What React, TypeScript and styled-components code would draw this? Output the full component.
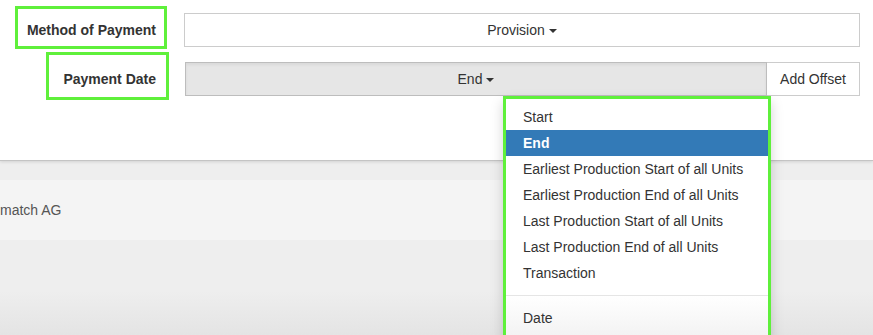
import React from 'react';
import styled, { createGlobalStyle } from 'styled-components';

const GlobalStyle = createGlobalStyle`
  html, body {
    margin: 0;
    padding: 0;
    overflow: hidden;
  }
  body {
    font-family: "Liberation Sans", Arial, sans-serif;
    font-size: 14px;
    color: #333;
    background: #eee;
  }
`;

const menuItems: { name: string; active?: boolean }[] = [
  { name: 'Start' },
  { name: 'End', active: true },
  { name: 'Earliest Production Start of all Units' },
  { name: 'Earliest Production End of all Units' },
  { name: 'Last Production Start of all Units' },
  { name: 'Last Production End of all Units' },
  { name: 'Transaction' }
];

export default function App() {
  return (
    <Page>
      <GlobalStyle />
      <TopPanel>
        <Form>
          <LabelCell>
            <Marked $pad="11px 8px 6px 9px" $top={-7} $right={3}>
              Method of Payment
            </Marked>
          </LabelCell>
          <Control>
            <Btn>
              Provision <Caret />
            </Btn>
          </Control>

          <LabelCell>
            <Marked $pad="14px 10px 8px 14px" $top={-10} $right={1}>
              Payment Date
            </Marked>
          </LabelCell>
          <Control>
            <DropdownWrap>
              <Btn $active>
                End <Caret />
              </Btn>
              <MenuFrame>
                <Menu>
                  {menuItems.map(x => (
                    <MenuItem key={x.name} $active={x.active}>{x.name}</MenuItem>
                  ))}
                  <Divider />
                  <MenuItem>Date</MenuItem>
                </Menu>
              </MenuFrame>
            </DropdownWrap>
            <OffsetBtn>Add Offset</OffsetBtn>
          </Control>
        </Form>
      </TopPanel>
      <Footer>
        <Band>match AG</Band>
      </Footer>
    </Page>
  );
}

const Page = styled.div`
  width: 873px;
  height: 335px;
  overflow: hidden;
  display: flex;
  flex-direction: column;
  background: #eee;
`;

const TopPanel = styled.div`
  flex: none;
  height: 161px;
  box-sizing: border-box;
  padding: 13px 13px 0 0;
  background: #fff;
  border-bottom: 1px solid #c4c4c4;
  box-shadow: 0 1px 3px rgba(0, 0, 0, 0.12);
  position: relative;
  z-index: 1;
`;

const Form = styled.div`
  display: grid;
  grid-template-columns: 170px 1fr;
  grid-auto-rows: 34px;
  column-gap: 14px;
  row-gap: 15px;
`;

const LabelCell = styled.div`
  display: flex;
  justify-content: flex-end;
  align-items: flex-start;
  height: 34px;
`;

const Marked = styled.label<{ $pad: string; $top: number; $right: number }>`
  display: block;
  flex: none;
  padding: ${p => p.$pad};
  margin-top: ${p => p.$top}px;
  margin-right: ${p => p.$right}px;
  border: 3px solid #5ff03b;
  font-weight: bold;
  line-height: 20px;
  white-space: nowrap;
  color: #333;
`;

const Control = styled.div`
  display: flex;
  height: 34px;
`;

const Btn = styled.button<{ $active?: boolean }>`
  flex: 1;
  height: 34px;
  display: flex;
  align-items: center;
  justify-content: center;
  gap: 4px;
  padding: 0 12px;
  box-sizing: border-box;
  font-family: inherit;
  font-size: 14px;
  color: #333;
  background: ${p => (p.$active ? '#e6e6e6' : '#fff')};
  border: 1px solid ${p => (p.$active ? '#bdbdbd' : '#ccc')};
  box-shadow: ${p => (p.$active ? 'inset 0 2px 3px rgba(0,0,0,0.06)' : 'none')};
`;

const Caret = styled.span`
  display: inline-block;
  width: 0;
  height: 0;
  border-top: 4px solid #333;
  border-left: 4px solid transparent;
  border-right: 4px solid transparent;
  margin-top: 1px;
`;

const DropdownWrap = styled.div`
  position: relative;
  flex: 1;
  display: flex;
  margin-left: 1px;
`;

const OffsetBtn = styled.button`
  width: 94px;
  height: 34px;
  margin-left: -1px;
  box-sizing: border-box;
  font-family: inherit;
  font-size: 14px;
  color: #333;
  background: #fff;
  border: 1px solid #ccc;
`;

const MenuFrame = styled.div`
  position: absolute;
  top: 100%;
  right: -4px;
  border: 3px solid #5ff03b;
  box-shadow: 0 6px 12px rgba(0, 0, 0, 0.175);
  z-index: 5;
`;

const Menu = styled.ul`
  list-style: none;
  margin: 0;
  width: 262px;
  padding: 5px 0;
  background: linear-gradient(to bottom, #fff 0, #fff 196px, #f2f2f2 240px);
`;

const MenuItem = styled.li<{ $active?: boolean }>`
  padding: 3px 18px 3px 17px;
  line-height: 20px;
  white-space: nowrap;
  color: ${p => (p.$active ? '#fff' : '#333')};
  background: ${p => (p.$active ? '#337ab7' : 'transparent')};
  font-weight: ${p => (p.$active ? 'bold' : 'normal')};
`;

const Divider = styled.li`
  height: 1px;
  margin: 9px 0;
  background: #e5e5e5;
`;

const Footer = styled.div`
  flex: 1;
  padding-top: 19px;
  background: linear-gradient(to bottom, #eee 0, #eee 130px, #e4e4e4 100%);
`;

const Band = styled.div`
  height: 60px;
  display: flex;
  align-items: center;
  background: #f4f4f4;
  color: #555;
  font-size: 14px;
`;
